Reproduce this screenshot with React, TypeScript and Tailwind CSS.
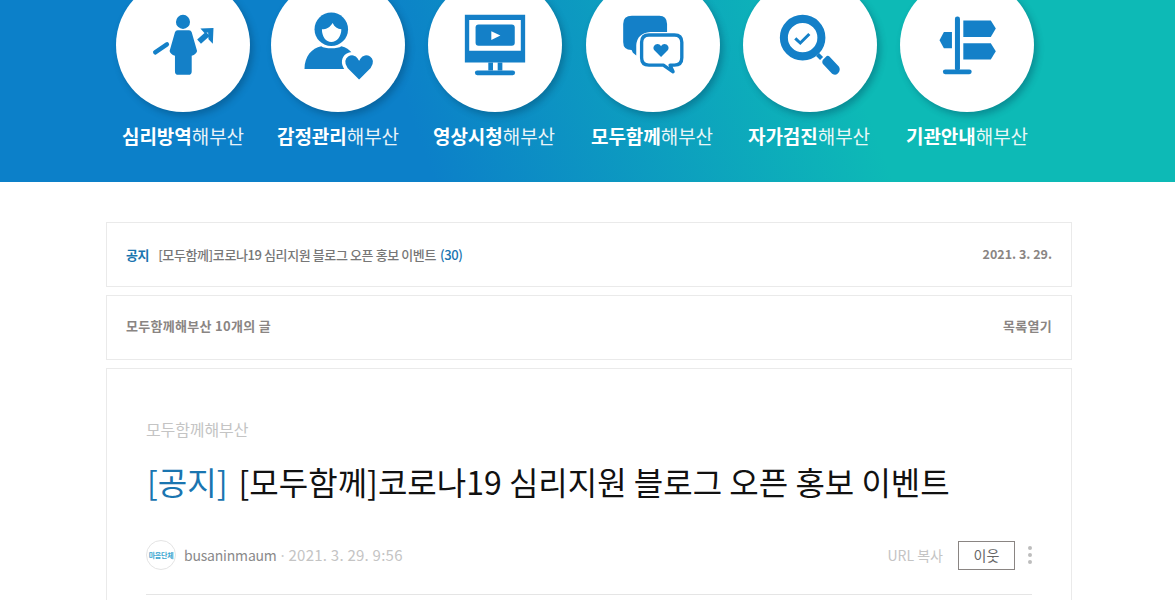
const items = [
  { b: "심리방역", ml: "ml-[116px]", w: "w-[155px]", tx: "ml-[6px]", box: "48 -65 400 400", icon: "a" },
  { b: "감정관리", ml: "", w: "w-[157px]", tx: "ml-[6px]", box: "515 -65 400 400", icon: "b" },
  { b: "영상시청", ml: "", w: "w-[158px]", tx: "ml-[5px]", box: "55 -65 400 400", icon: "c" },
  { b: "모두함께", ml: "", w: "w-[157px]", tx: "ml-[5px]", box: "528 -65 400 400", icon: "d" },
  { b: "자가검진", ml: "", w: "w-[157px]", tx: "ml-[5px]", box: "40 -65 400 400", icon: "e" },
  { b: "기관안내", ml: "", w: "w-[157px]", tx: "ml-[6px]", box: "512 -65 400 400", icon: "f" },
];

const C = "#1480c8";

function Icon({ kind }: { kind: string }) {
  if (kind === "a")
    return (
      <g fill={C}>
        <circle cx="248" cy="66" r="21" />
        <path d="M232 91h34q6 0 8 6l16 56q-2 10-16 14v47q0 10-10 10h-30q-10 0-10-10v-47q-14-4-16-14l16-56q2-6 8-6z" />
        <path d="M165 157l35-24" stroke={C} strokeWidth="13" strokeLinecap="round" />
        <path d="M296 125l26-23" stroke={C} strokeWidth="17" />
        <path d="M300 86l39-2-2 47-13-13-1-20-11 1z" />
      </g>
    );
  if (kind === "b")
    return (
      <g fill={C}>
        <circle cx="695" cy="88" r="50" />
        <path d="M667 88c14 0 24-6 32-19 6 12 14 18 26 19 0 22-14 38-30 38s-28-16-28-38z" fill="#fff" />
        <path d="M615 207c0-38 22-62 50-68 10 8 50 8 60 0 14 3 24 10 32 20l-20 48z" />
        <path d="M778 245l-38-38c-28-38 22-62 38-34 16-28 66-4 38 34z" stroke="#fff" strokeWidth="10" />
        <path d="M778 235l-34-35c-14-26 22-40 34-15 12-25 48-11 34 15z" />
      </g>
    );
  if (kind === "c")
    return (
      <g fill={C}>
        <path d="M165 45h180v142H165z" />
        <path d="M178 60h154v92H178z" fill="#fff" />
        <rect x="197" y="74" width="117" height="63" rx="9" />
        <path d="M244 94l27 13-27 13z" fill="#fff" />
        <path d="M235 187h14v24h-14zM263 187h14v24h-14z" />
        <rect x="195" y="211" width="120" height="14" rx="7" />
      </g>
    );
  if (kind === "d")
    return (
      <g fill={C}>
        <path d="M665 48h82q22 0 23 24v24h-50q-40 4-42 40v30l-10-8-4-8q-25 0-25-24v-54q0-24 26-24z" />
        <path d="M716 105h76q22 0 22 22v46q0 22-22 22h-13l9 20-29-20h-43q-22 0-22-22v-46q0-22 22-22z" fill="#fff" stroke={C} strokeWidth="10" strokeLinejoin="round" />
        <path d="M752 171l-20-20c-10-14 12-28 20-12 8-16 30-2 20 12z" />
      </g>
    );
  if (kind === "e")
    return (
      <g fill={C}>
        <circle cx="218" cy="113" r="56" fill="#fff" stroke={C} strokeWidth="24" />
        <path d="M196 115l15 14 27-27" fill="none" stroke={C} strokeWidth="9" />
        <path d="M258 168l9-9 12 12-9 9z" />
        <path d="M278 180l12-12q4-2 8 1l28 30q6 9-1 19t-19 3l-28-30q-3-5 0-11z" />
      </g>
    );
  return (
    <g fill={C}>
      <rect x="676" y="50" width="15" height="162" rx="7" />
      <rect x="640" y="208" width="86" height="14" rx="7" />
      <path d="M701 62h82l15 24-15 25h-82z" />
      <path d="M701 130h82l15 24-15 24h-82z" />
      <path d="M667 96h-24l-13 25 13 24h24z" />
    </g>
  );
}

export default function App() {
  const font = "font-['Noto_Sans_CJK_KR','Noto_Sans',sans-serif]";
  return (
    <div className={`min-h-[600px] h-[600px] overflow-hidden bg-white ${font}`}>
      <header className="h-[182px] overflow-hidden bg-[linear-gradient(70deg,#0c80c9_35%,#0dbab6_72%)]">
        <div className="flex -mt-[22px]">
          {items.map((it) => (
            <div key={it.b} className={`${it.ml} ${it.w} shrink-0`}>
              <div className="w-[134px] h-[134px] rounded-full bg-white shadow-[3px_4px_7px_rgba(0,40,70,0.3)]">
                <svg viewBox={it.box} width="134" height="134">
                  <Icon kind={it.icon} />
                </svg>
              </div>
              <div className={`${it.tx} mt-[10px] h-[28px] leading-[28px] text-[19px] tracking-[-0.05px] text-white whitespace-nowrap`}>
                <b className="font-bold">{it.b}</b>
                <span className="font-normal opacity-90">해부산</span>
              </div>
            </div>
          ))}
        </div>
      </header>

      <main className="w-[966px] ml-[106px] pt-[40px] flex flex-col gap-[8px]">
        <section className="h-[65px] border border-[#eaeaea] flex items-center justify-between px-[19px] text-[13px] font-medium">
          <div className="flex items-center whitespace-nowrap tracking-[-0.4px]">
            <span className="text-[#1a75b0] font-bold mr-[9px]">공지</span>
            <span className="text-[#777]">[모두함께]코로나19 심리지원 블로그 오픈 홍보 이벤트</span>
            <span className="text-[#1a75b0] ml-[4px]">(30)</span>
          </div>
          <span className="text-[#8a8583] font-bold text-[12.5px]">2021. 3. 29.</span>
        </section>

        <section className="h-[65px] pb-[3px] border border-[#eaeaea] flex items-center justify-between px-[19px] text-[13px] font-bold text-[#8a8583]">
          <span className="tracking-[0.3px]">모두함께해부산 10개의 글</span>
          <span className="tracking-[0.3px]">목록열기</span>
        </section>

        <article className="h-[400px] border border-[#eaeaea] px-[39px] pt-[49px]">
          <div className="text-[16px] leading-[22px] text-[#c4c4c4] tracking-[-0.1px]">모두함께해부산</div>
          <h1 className="mt-[19px] text-[32px] leading-[44px] font-normal text-[#111] whitespace-nowrap">
            <span className="text-[#1a75b0] ml-px">[공지]</span>
            <span className="ml-[11px]">[모두함께]코로나19 심리지원 블로그 오픈 홍보 이벤트</span>
          </h1>
          <div className="mt-[37px] h-[55px] border-b border-[#e5e5e5] flex justify-between items-start">
            <div className="flex items-center h-[30px] text-[14px] whitespace-nowrap">
              <div className="w-[30px] h-[30px] rounded-full border border-[#e4e4e4] flex items-center justify-center text-[7px] font-bold tracking-[-0.3px] text-[#3aa6d0] overflow-hidden">
                마음단체
              </div>
              <span className="ml-[8px] text-[#8a8a8a] tracking-[-0.2px]">busaninmaum</span>
              <span className="ml-[2px] text-[#ccc]">·</span>
              <span className="ml-[2px] text-[#c4c4c4] text-[15px] tracking-[0.25px]">2021. 3. 29. 9:56</span>
            </div>
            <div className="flex items-center h-[30px] text-[14px]">
              <span className="text-[#c4c4c4]">URL 복사</span>
              <button className="ml-[15px] w-[57px] h-[29px] border border-[#8a8583] text-[#666] text-[14px]">이웃</button>
              <span className="ml-[13px] flex flex-col gap-[3px]">
                <i className="block w-[4px] h-[4px] rounded-full bg-[#bdbdbd]" />
                <i className="block w-[4px] h-[4px] rounded-full bg-[#bdbdbd]" />
                <i className="block w-[4px] h-[4px] rounded-full bg-[#bdbdbd]" />
              </span>
            </div>
          </div>
        </article>
      </main>
    </div>
  );
}
